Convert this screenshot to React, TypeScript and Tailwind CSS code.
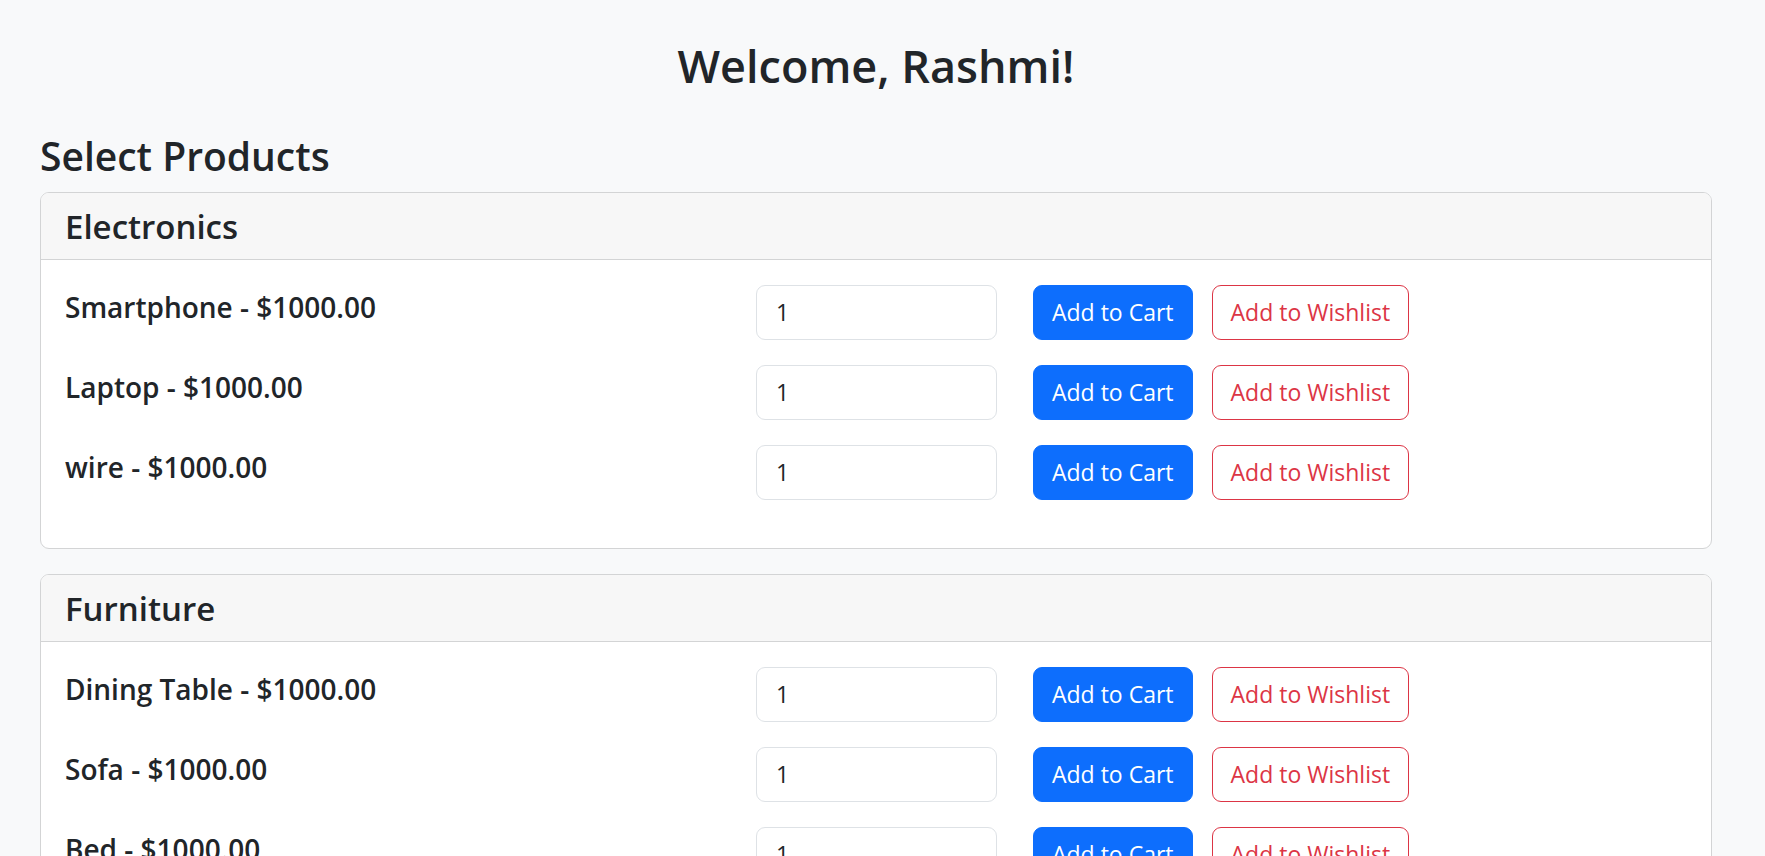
import React from "react"

type Category = {
  name: string
  products: { name: string; price: number }[]
}

const categories: Category[] = [
  {
    name: "Electronics",
    products: [
      { name: "Smartphone", price: 1000 },
      { name: "Laptop", price: 1000 },
      { name: "wire", price: 1000 },
    ],
  },
  {
    name: "Furniture",
    products: [
      { name: "Dining Table", price: 1000 },
      { name: "Sofa", price: 1000 },
      { name: "Bed", price: 1000 },
    ],
  },
]

function ProductRow({ name, price }: { name: string; price: number }) {
  return (
    <div className="grid grid-cols-[655px_241px_1fr] gap-x-[36px] items-start">
      <h5 className="pt-[6px] text-[28px] font-semibold leading-[1.2]">
        {name} - ${price.toFixed(2)}
      </h5>
      <input
        type="number"
        defaultValue={1}
        className="h-[55px] w-[241px] rounded-[9px] border border-[#dee2e6] bg-white px-[19px] text-[23px] text-[#212529] outline-none"
      />
      <div className="flex items-center gap-[19px]">
        <button className="h-[55px] rounded-[9px] border border-[#0d6efd] bg-[#0d6efd] px-[18px] text-[23px] text-white">
          Add to Cart
        </button>
        <button className="h-[55px] rounded-[9px] border border-[#dc3545] bg-transparent px-[18px] text-[23px] text-[#dc3545]">
          Add to Wishlist
        </button>
      </div>
    </div>
  )
}

function CategoryCard({ category }: { category: Category }) {
  return (
    <div className="overflow-hidden rounded-[9px] border border-[#d3d4d5] bg-white">
      <div className="h-[67px] border-b border-[#d3d4d5] bg-[#f7f7f7] px-[24px] pt-[14px]">
        <h4 className="text-[33px] font-semibold leading-[1.2]">{category.name}</h4>
      </div>
      <div className="flex flex-col gap-[25px] px-[24px] pt-[25px] pb-[48px]">
        {category.products.map((p) => (
          <ProductRow key={p.name} name={p.name} price={p.price} />
        ))}
      </div>
    </div>
  )
}

export default function App() {
  return (
    <div className="min-h-screen bg-[#f8f9fa] font-['Open_Sans',sans-serif] text-[#212529]">
      <div className="w-[1752px] px-[40px] pt-[39px]">
        <h2 className="text-center text-[45px] font-semibold leading-[1.2]">Welcome, Rashmi!</h2>
        <h3 className="mt-[40px] mb-[12px] text-[39px] font-semibold leading-[1.2]">Select Products</h3>
        <div className="flex flex-col gap-[25px]">
          {categories.map((c) => (
            <CategoryCard key={c.name} category={c} />
          ))}
        </div>
      </div>
    </div>
  )
}
